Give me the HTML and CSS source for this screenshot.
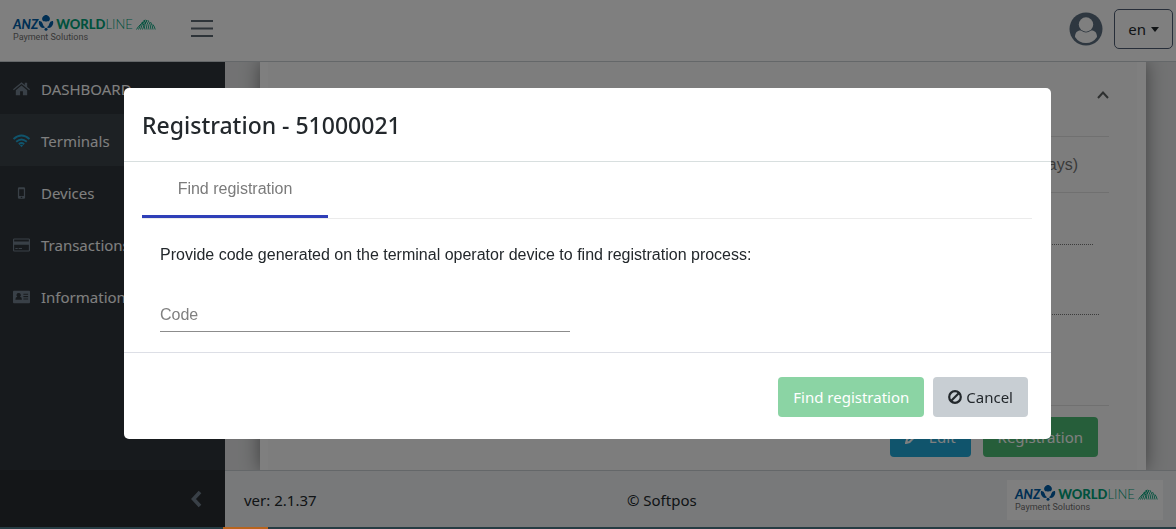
FILE: index.html
```html
<!DOCTYPE html>
<html lang="en">
<head>
<meta charset="utf-8">
<meta name="viewport" content="width=device-width, initial-scale=1">
<title>Registration - 51000021</title>
<link rel="stylesheet" href="styles.css">
</head>
<body>
<svg class="defs" aria-hidden="true">
  <symbol id="flower" viewBox="0 0 16 16">
    <path d="M5.500 6.600A3.700 3.700 0 1 1 10.500 6.600L9.300 5.200A1.700 1.700 0 1 0 6.700 5.200Z"/>
    <circle cx="8" cy="4" r="2.600"/>
    <path d="M1 6Q4 5.500 4.600 8.500T7.200 12.200Q5 13.800 3 12.200 0 9.500 1 6ZM15 6Q12 5.500 11.400 8.500T8.800 12.200Q11 13.800 13 12.200 16 9.500 15 6Z"/>
    <circle cx="8" cy="14.300" r="1.500"/>
  </symbol>
  <symbol id="shell" viewBox="0 0 20 11">
    <path d="M.5 10.500Q2 7.500 5 5M2.500 10.500Q4 6 7 2.500M4.500 10.500Q6 4.500 9 .8M6.500 10.500Q8 5 11 1M9 10.500Q8.500 6 6 3M11 10.500Q10.500 5 7.800 1M13 10.500Q12.500 5 9.800 .8M15 10.500Q14.500 5 12 1.200M17 10.500Q16.500 6 14.500 3M19.200 10.500Q18.700 8 17 5.500" fill="none" stroke="currentColor" stroke-width=".9"/>
  </symbol>
</svg>

<div class="app">
  <header class="topbar">
    <a class="logo" href="#" aria-label="ANZ Worldline Payment Solutions">
      <span class="logo-row"><b class="anz">ANZ</b><svg class="flower"><use href="#flower"/></svg><b class="world">WORLD</b><span class="line">LINE</span><svg class="shell"><use href="#shell"/></svg></span>
      <span class="logo-sub">Payment Solutions</span>
    </a>
    <button class="burger" type="button" aria-label="Toggle menu">
      <svg viewBox="0 0 22 18"><path d="M0 1H22M0 8.500H22M0 16H22" stroke="currentColor" stroke-width="2"/></svg>
    </button>
    <button class="avatar" type="button" aria-label="Account">
      <svg viewBox="0 0 34 34"><circle cx="17" cy="17" r="16.500" fill="currentColor"/><circle cx="17" cy="12.500" r="7.200" fill="#fff"/><path d="M6 25C6 20 9 18 12 18.500Q17 22.500 22 18.500C25 18 28 20 28 25Q24 31 17 31T6 25Z" fill="#fff"/></svg>
    </button>
    <button class="lang" type="button">en<span class="caret"></span></button>
  </header>

  <div class="middle">
    <aside class="sidebar">
      <nav>
        <a href="#"><svg viewBox="0 0 18 16"><path d="M9 4.200 3 9.200V14.500H7.500V10.500H10.500V14.500H15V9.200ZM0 8.200 9 .8 12.500 3.700V1.500H15V5.800L18 8.200 17.200 9.200 9 2.600.8 9.200Z"/></svg>DASHBOARD</a>
        <a class="active" href="#"><svg viewBox="0 0 18 16"><path d="M.6 6Q9-1.500 17.400 6M3.400 8.800Q9 4 14.600 8.800M6.200 11.400Q9 9 11.800 11.400" fill="none" stroke="currentColor" stroke-width="2"/><path d="M7.300 12.600Q9 11.600 10.700 12.600L9 14.500Z"/></svg>Terminals</a>
        <a href="#"><svg viewBox="0 0 18 16"><path fill-rule="evenodd" d="M6.500 2H11.500Q12.800 2 12.800 3.300V12.700Q12.800 14 11.500 14H6.500Q5.200 14 5.200 12.700V3.300Q5.200 2 6.500 2ZM6.500 4V11.200H11.500V4ZM8.200 12H9.800V13.300H8.200Z"/></svg>Devices</a>
        <a href="#"><svg viewBox="0 0 18 16"><path fill-rule="evenodd" d="M1.500 1H16.500Q18 1 18 2.500V13.500Q18 15 16.500 15H1.500Q0 15 0 13.500V2.500Q0 1 1.500 1ZM1.200 2.200V4.200H16.800V2.200ZM1.200 7.800V13.800H16.800V7.800ZM2.500 11.200H5V12.300H2.500ZM6 11.200H9.500V12.300H6Z"/></svg>Transactions</a>
        <a href="#"><svg viewBox="0 0 18 16"><path fill-rule="evenodd" d="M1 1.500H17Q18 1.500 18 2.500V13.500Q18 14.500 17 14.500H1Q0 14.500 0 13.500V2.500Q0 1.500 1 1.500ZM6 3.800A2.200 2.200 0 0 0 4.600 7.800Q2.500 8 2.500 11H9.500Q9.500 8 7.400 7.800A2.200 2.200 0 0 0 6 3.800ZM11 4.500V5.700H16V4.500ZM11 7V8.200H16V7ZM11 9.500V10.700H16V9.500Z"/></svg>Information</a>
      </nav>
      <button class="minimizer" type="button" aria-label="Collapse menu">
        <svg viewBox="0 0 12 18"><path d="M10 2 3.500 9 10 16" fill="none" stroke="currentColor" stroke-width="3.600"/></svg>
      </button>
    </aside>

    <div class="page">
      <main class="main">
        <section class="card">
          <div class="row head"><svg class="up" viewBox="0 0 12 8"><path d="M1 7 6 1.500 11 7" fill="none" stroke="currentColor" stroke-width="2"/></svg></div>
          <div class="row days">days)</div>
          <div class="row field"></div>
          <div class="row field tall"></div>
          <div class="row rest"></div>
          <div class="actions">
            <button class="btn info" type="button"><svg viewBox="0 0 14 14"><path d="M1 13 2 9.500 9.500 2 12 4.500 4.500 12Z" fill="none" stroke="currentColor" stroke-width="2"/></svg>Edit</button>
            <button class="btn success" type="button">Registration</button>
          </div>
        </section>
      </main>
      <footer class="footer">
        <span>ver: 2.1.37</span>
        <span>© Softpos</span>
        <div class="brand">
          <div class="logo">
            <span class="logo-row"><b class="anz">ANZ</b><svg class="flower"><use href="#flower"/></svg><b class="world">WORLD</b><span class="line">LINE</span><svg class="shell"><use href="#shell"/></svg></span>
            <span class="logo-sub">Payment Solutions</span>
          </div>
        </div>
      </footer>
    </div>
  </div>
</div>

<div class="backdrop">
  <div class="modal" role="dialog" aria-modal="true" aria-labelledby="title">
    <div class="modal-head"><h1 id="title">Registration - 51000021</h1></div>
    <div class="modal-body">
      <div class="tabs" role="tablist"><button class="tab" type="button" role="tab" aria-selected="true">Find registration</button></div>
      <div class="panel" role="tabpanel">
        <label for="code">Provide code generated on the terminal operator device to find registration process:</label>
        <input id="code" type="text" placeholder="Code">
      </div>
    </div>
    <div class="modal-foot">
      <button class="btn success" type="button" disabled>Find registration</button>
      <button class="btn secondary" type="button"><svg viewBox="0 0 14 14"><circle cx="7" cy="7" r="5.800" fill="none" stroke="currentColor" stroke-width="2.200"/><path d="M3 11 11 3" stroke="currentColor" stroke-width="2.200"/></svg>Cancel</button>
    </div>
  </div>
</div>
<div class="strip"><i></i></div>
</body>
</html>
```
FILE: styles.css
```css
* { box-sizing: border-box; }
body {
  margin: 0;
  font: 16px/24px "Noto Sans", "Open Sans", sans-serif;
  color: #23282c;
  background: #e4e5e6;
}
button { font: inherit; color: inherit; margin: 0; padding: 0; border: 0; background: none; }
a { color: inherit; text-decoration: none; }
.defs { position: absolute; width: 0; height: 0; }

.app { display: flex; flex-direction: column; height: 100vh; overflow: hidden; }

.topbar {
  display: flex;
  align-items: center;
  height: 62px;
  flex: none;
  padding: 0 3px 3px 13px;
  background: #fff;
  border-bottom: 1px solid #c8ced3;
}
.logo { display: flex; flex-direction: column; width: 144px; font-family: Lato, sans-serif; }
.logo-row { display: flex; align-items: center; height: 16px; font-size: 13px; line-height: 16px; color: #00a37a; }
.anz { color: #005ea8; font-weight: 900; font-style: italic; }
.flower { width: 16px; height: 16px; margin: 0 2px 2px 0; fill: #005ea8; flex: none; }
.world { font-weight: 900; }
.line { font-weight: 300; font-size: 13px; }
.shell { width: 20px; height: 11px; margin-left: 3px; flex: none; }
.logo-sub { font: 9px/10px Roboto, sans-serif; color: #707070; }

.burger { margin-left: 34px; color: #5c6873; }
.burger svg { display: block; width: 22px; height: 18px; }
.avatar { margin-left: auto; color: #5c6f80; }
.avatar svg { display: block; width: 34px; height: 34px; }
.lang {
  display: flex;
  align-items: center;
  gap: 5px;
  height: 40px;
  margin-left: 11px;
  padding: 0 13px;
  border: 1px solid #4f5d73;
  border-radius: 5px;
  font-size: 15px;
}
.caret { border: 4px solid transparent; border-top: 5px solid #23282c; border-bottom: 0; }

.middle { display: flex; flex: 1; min-height: 0; }
.sidebar { display: flex; flex-direction: column; width: 225px; flex: none; background: #2f353a; color: #fff; }
.sidebar nav { flex: 1; }
.sidebar a { display: flex; align-items: center; gap: 11px; height: 52px; padding: 2px 0 0 13px; font-size: 15px; }
.sidebar a svg { width: 17px; height: 16px; fill: currentColor; color: #73818f; }
.sidebar .active { background: #3a4248; }
.sidebar .active svg { color: #20a8d8; }
.minimizer { display: flex; justify-content: flex-end; align-items: center; height: 59px; padding: 0 23px 2px 0; background: #282c30; color: #73818f; }
.minimizer svg { width: 12px; height: 18px; }

.page { display: flex; flex-direction: column; flex: 1; min-width: 0; }
.main { flex: 1; min-height: 0; overflow: hidden; padding: 0 30px 0 35px; }
.card {
  height: 100%;
  padding: 0 28px 0 8px;
  background: #fbfbfb;
  border: solid #fff;
  border-width: 0 9px 0 8px;
  box-shadow: 0 0 18px rgba(0, 0, 0, .45);
}
.row { display: flex; align-items: center; justify-content: flex-end; border-bottom: 1px solid #e0e0e0; }
.head { height: 75px; padding: 0 0 8px; color: #5c6060; }
.up { width: 12px; height: 8px; }
.days { height: 56px; padding-right: 31px; font-family: "Liberation Sans", Arial, sans-serif; color: #757575; }
.field { height: 52px; margin-right: 16px; border-bottom: 1px dotted #777; }
.tall { height: 70px; margin-right: 10px; }
.rest { height: 91px; }
.actions { display: flex; justify-content: flex-end; gap: 12px; padding: 11px 11px 0 0; }

.btn { display: flex; align-items: center; justify-content: center; gap: 4px; height: 40px; padding: 0 15px; border-radius: 4px; font-size: 15px; }
.btn svg { width: 14px; height: 14px; }
.info { gap: 10px; background: #20a8d8; color: #fff; }
.success { background: #4dbd74; color: #fff; }
.success:disabled { opacity: .65; }
.secondary { background: #c8ced3; color: #23282c; }

.footer {
  display: flex;
  justify-content: space-between;
  align-items: center;
  height: 59px;
  padding: 0 13px 0 19px;
  background: #f0f3f5;
  border-top: 1px solid #c8ced3;
  font-size: 15px;
}
.brand { padding: 6px 4px 8px 8px; background: #fff; }

.backdrop { position: fixed; inset: 0; padding: 88px 25px 0 24px; background: rgba(0, 0, 0, .5); }
.modal { max-width: 927px; margin: 0 auto; background: #fff; border-radius: 5px; }
.modal-head { padding: 22px 18px 21px; border-bottom: 1px solid #d8dfdf; }
h1 { margin: 0; font-size: 23px; line-height: 30px; font-weight: 500; }
.modal-body { padding: 0 19px 20px 18px; font-family: "Liberation Sans", Arial, sans-serif; }
.tabs { display: flex; border-bottom: 1px solid #ebebeb; }
.tab { width: 186px; height: 56px; border-bottom: 3px solid #2f3fb8; color: #7b7b7b; }
.panel { padding: 24px 18px 0; }
.panel label { display: block; }
.panel input {
  display: block;
  width: 410px;
  max-width: 100%;
  height: 34px;
  margin-top: 31px;
  padding: 0;
  border: 0;
  border-bottom: 1px solid #8c8c8c;
  font: inherit;
  outline: 0;
}
.panel input::placeholder { color: #808080; opacity: 1; }
.modal-foot { display: flex; justify-content: flex-end; gap: 9px; padding: 24px 23px 22px; border-top: 1px solid #dddfe6; }

.strip { position: fixed; inset: auto 0 0; height: 2px; background: #263c43; }
.strip i { display: block; width: 45px; height: 2px; margin-left: 223px; background: #b8641d; }
```
